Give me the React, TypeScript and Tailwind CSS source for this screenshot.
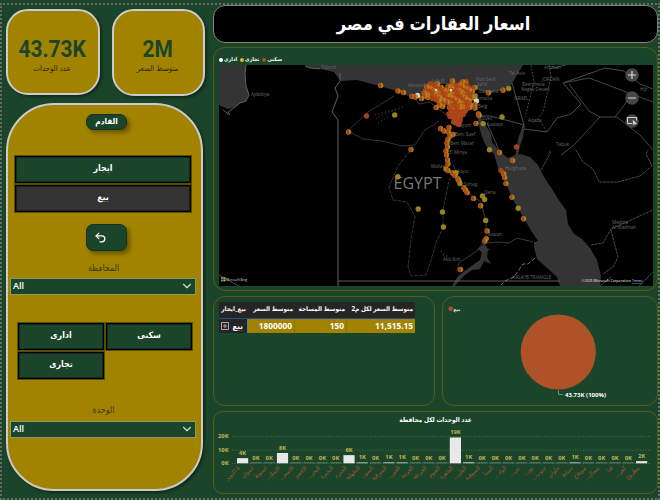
import React from "react";
import { ChevronDown, Undo2 } from "lucide-react";

type Kind = "s" | "o" | "y" | "w";
type Dot = [number, number, Kind];

const cities: Dot[] = [
  [380.7, 85.5, "s"], [398, 91, "s"], [403.5, 92.5, "s"], [417.5, 95.5, "w"], [412, 96.5, "s"], [415.5, 97, "s"],
  [366.5, 116, "o"], [394.7, 115, "y"], [348.5, 132, "s"], [411, 149.5, "s"], [397.8, 176.7, "y"], [418.2, 209, "y"],
  [442.5, 212, "y"], [443.5, 227, "y"], [452.5, 81, "s"], [475, 87.5, "s"], [488.5, 92.7, "s"], [503, 90.3, "s"],
  [508.7, 88.5, "y"], [475.2, 96, "y"], [476.4, 101, "w"], [475, 104.5, "s"], [475, 108, "s"], [478.5, 114, "s"],
  [479.3, 115.5, "s"], [483.2, 123.6, "y"], [476, 123.4, "s"], [502, 117, "y"], [516.5, 147, "o"], [489.5, 149.7, "y"],
  [499.5, 152.5, "s"], [512.6, 160.5, "s"], [501, 170.5, "o"], [503.7, 173.8, "s"], [504.7, 177.5, "s"], [505.9, 183.6, "s"],
  [512, 197.2, "s"], [518.2, 208.2, "y"], [523.5, 218.7, "s"], [440.5, 128.5, "s"], [444, 131, "s"], [449, 127.5, "s"],
  [448.5, 132, "s"], [453, 134.5, "s"], [450, 136, "s"], [448, 139.5, "s"], [447, 143, "s"], [447.5, 147, "s"],
  [446, 151, "s"], [446.5, 155, "s"], [447.5, 160, "s"], [448, 164, "s"], [446, 169, "y"], [448, 170.5, "s"],
  [452.5, 173, "s"], [456, 172.8, "y"], [455, 175.5, "s"], [458, 179, "s"], [460, 183.5, "y"], [459, 181, "s"],
  [464, 188, "s"], [465.5, 190, "s"], [467.2, 192.6, "s"], [473.5, 198.4, "s"], [482.5, 196, "y"], [484.6, 199.5, "y"],
  [480.6, 205.8, "s"], [485.7, 220.4, "y"], [487.2, 230.9, "s"], [486.3, 238.6, "s"], [484.9, 240.9, "s"], [460.5, 269.5, "s"],
];

/* Nile delta: rows of [y, left, right] filled with evenly jittered points */
const deltaRows: number[][] = [
  [83, 462, 467], [85.5, 429, 438], [86, 450, 467], [88.5, 426, 441], [88, 448, 469], [91.5, 424, 472],
  [94, 423, 470], [97, 422, 427], [97, 436, 471], [100, 432, 470], [103, 445, 470], [106, 437, 444],
  [106.5, 448, 471], [109.5, 450, 467], [112, 449, 465], [115, 447, 463], [118, 449, 460], [121, 453, 459], [124, 454, 458],
];
const delta: Dot[] = deltaRows.flatMap(([y, a, b], r) => {
  const out: Dot[] = [];
  let i = 0;
  for (let x = b; x >= a; x -= 2.3, i++) {
    const k = (r * 7 + i * 5) % 11;
    out.push([x + ((k * 3) % 4) * 0.6 - 0.9, y + ((k * 5) % 7) * 0.5 - 1.5, k % 3 === 0 || y > 111 ? "o" : "s"]);
  }
  return out;
});

function Bubble({ d }: { d: Dot }) {
  const [x, y, k] = d;
  const base = k === "o" ? "#ad4419" : k === "w" ? "#e6e0da" : k === "y" ? "#a58b20" : "#b8871c";
  return (
    <g opacity={0.93}>
      <circle cx={x} cy={y} r={2.7} fill={base} />
      {k === "s" && <path d={`M${x + 0.5} ${y - 2.7}A2.7 2.7 0 1 0 ${x + 0.5} ${y + 2.7}Z`} fill="#b4481a" />}
    </g>
  );
}

const places: [number, number, string][] = [
  [251, 96, "Ajdabiya"], [321, 69.3, "Tobruk"], [408, 86.5, "Alexandria"], [431, 83, "Kafr El"], [476, 81, "Port Said"],
  [477, 86, "Sa'id"], [479, 93, "Damiana"], [476, 99.5, "Ismailia"], [478, 108, "Belg"], [482, 120, "Suez"], [487, 125.5, "Suways"],
  [456, 127, "Faiyum"], [455, 136, "Beni Suef"], [450, 145, "Beni Mazar"], [449, 153.5, "El Minya"], [431, 168, "Mallawi"],
  [457, 172.5, "Asyut"], [464, 185.5, "Sohag"], [484, 193.5, "Qena"], [505, 170, "Hurghada"], [488, 236, "Aswan"],
  [443, 260.5, "Abu Sim"], [509, 74.5, "Tel Aviv"], [544, 69.3, "Amman"], [542, 81, "JORDAN"], [522, 86, "Beersheva"],
  [521, 91.2, "Negev Desert"], [514, 100, "ISRAEL"], [528, 122, "Aqaba"], [556, 146, "Tabuk"], [640, 91, "Hijr"],
  [612, 223.5, "Medina"], [612, 228.6, "Al Madinah"], [512, 279, "HALA'IB TRIANGLE"],
];

function MapArt() {
  return (
    <svg className="block h-[221px] w-[434px]" viewBox="219 65 434 221" fontFamily="'Open Sans','Noto Sans',sans-serif">
      <rect x="219" y="65" width="434" height="221" fill="#000" />
      <g fill="#343434">
        <path d="M219 65H246L245 74L246 86L249 94L246 101L240 103L235 107L228 109L219 105Z" />
        <path d="M305 65L309 68L320 69L334 72L339 79L341 81L357 80L376 85L397 91L411 97L422 98L429 87L438 84L451 84L466 81L475 89L488 93L503 90L511 85L517 75L523 65Z" />
        <path d="M477 115L482 119L491 134L492 142L500 152L508 158L515 155L521 154L530 157L538 165L544 177L552 189L558 199L566 210L568 224L574 234L582 239L590 248L597 260L601 276L600 286H560L557 277L546 267L537 259L534 247V242L538 241L532 232L523 217L513 200L506 184L498 168L494 154L486 146L482 137L479 126Z" />
        <path d="M523 125L525 126L523 137L520 146L518 156L515 157L518 139Z" />
        <path d="M484 242L488 249L487 257L491 264L484 261L480 269L472 270L465 275L458 282L455 286H452L458 276L470 267L480 260L482 252L477 249L482 246Z" />
      </g>
      <g fill="none" stroke="#4b4b4b" strokeWidth="1">
        <path d="M246 65L245 74L246 86L249 95L246 101L240 103L235 107L228 112L230 115L223 110M305 66L310 68L320 69M340 73L340 81L335 88L338 96L332 112L338 120V286" stroke="#606060" />
        <path d="M338 281H560" stroke="#5c5c5c" strokeWidth="1.2" />
        <path d="M219 275L239 286" />
        <path d="M512 83L524 125L522 128M524 129L547 132L557 118L571 114L581 104L563 83L605 68L624 71" />
        <path d="M531 65L534 82L525 117M549 65L551 77L543 112L538 118L547 132" strokeDasharray="2 1.5" />
        <path d="M563 83L589 78L653 102M624 71L640 84L653 89M549 69L566 65M569 84L589 111L600 117L617 117L640 135L653 150M600 117L574 145L561 155M615 117L625 104L630 95" stroke="#464646" />
        <path d="M541 170L550 154V150M576 150L583 162L593 169L599 182L618 182L640 176L652 166L646 154L648 150M591 245L603 243L611 229L653 210M611 230L618 257L613 267L603 274M600 286L611 277M639 286L653 272" strokeDasharray="3 .7" />
        <path d="M476 116H490L502 119L524 125M487 123L496 143L499 151" />
        <path d="M394 96L368 112L348 131L363 139L382 141L402 146L415 145L424 131L439 121M413 96L419 104L430 102L446 115" stroke="#353535" />
        <path d="M410 151L398 166L389 187L393 200L407 202L415 216L411 240L408 267L411 276L426 275L430 263L437 240L443 228V210L449 180L456 171" strokeDasharray="4 1" stroke="#343434" />
        <path d="M453 164L461 184L471 195L481 202L486 222L486 238L478 250L459 263L457 271" stroke="#383838" />
        <path d="M486 243L498 242L509 243L517 238L533 242M490 249L483 252" stroke="#383838" />
        <path d="M535 258L528 264L523 264L514 277L505 281L500 286" strokeDasharray="4 2" stroke="#777" />
      </g>
      <path d="M376 119Q385 112 402 108M375 115L403 107M378 123L390 116M443 255L456 260M441 251L447 256" stroke="#303030" strokeWidth="1.5" strokeDasharray="1 2.5" fill="none" />
      <g fill="#686868" fontSize="4.6">
        {places.map(([x, y, t]) => <text key={`${x}-${y}`} x={x} y={y}>{t}</text>)}
      </g>
      <text x="393.5" y="188.5" fill="#777" fontSize="17.2" textLength="48" lengthAdjust="spacingAndGlyphs">EGYPT</text>
      <g>{[...delta, ...cities].map((d, i) => <Bubble key={i} d={d} />)}</g>
      <g fill="#ded7cf"><circle cx="436" cy="90" r="1.3" /><circle cx="451" cy="90" r="1.3" /></g>
      <g fill="#474747"><circle cx="632" cy="75" r="6.7" /><circle cx="632" cy="98" r="6.7" /><circle cx="632" cy="121" r="6.7" /></g>
      <g stroke="#ddd" strokeWidth="1.2" fill="none">
        <path d="M628 75h8M632 71v8M628 98h8" />
        <path d="M632 123.5H627.5V117.5H636.5V120.5" strokeWidth=".9" />
        <path d="M633.3 120.5v4.3l1.2-1h2Z" strokeWidth=".7" fill="#ddd" />
      </g>
      <g>
        <path d="M221 277h2v2h-2z" fill="#f25022" /><path d="M223.4 277h2v2h-2z" fill="#7fba00" />
        <path d="M221 279.4h2v2h-2z" fill="#00a4ef" /><path d="M223.4 279.4h2v2h-2z" fill="#ffb900" />
        <text x="226" y="281.2" fill="#ddd" fontSize="4" textLength="21" lengthAdjust="spacingAndGlyphs">Microsoft Bing</text>
        <text x="581.5" y="282" fill="#ccc" fontSize="4" fontWeight="600" textLength="61" lengthAdjust="spacingAndGlyphs">
          ©2025 Microsoft Corporation <tspan fill="#9cb4ee" textDecoration="underline">Terms</tspan>
        </text>
      </g>
    </svg>
  );
}

const governorates: [string, number][] = [
  ["6 اكتوبر", 3.8], ["اسوان", 0], ["اسيوط", 0], ["الاسك…", 7.6], ["الاسم…", 0], ["الاقصر", 0], ["البحر…", 0.2],
  ["البحيرة", 0], ["الجيزة", 6], ["الدقهلية", 0.7], ["السو…", 0], ["الشرقية", 0.8], ["العين…", 0.6], ["الغربية", 0],
  ["الغردقة", 0], ["الفيوم", 0], ["القاهرة", 19], ["القلي…", 0.9], ["المنوفية", 0], ["المنيا", 0], ["الواد…", 0],
  ["بني…", 0], ["بور…", 0], ["جنوب…", 0], ["حلوان", 0], ["دمياط", 0.6], ["سوهاج", 0], ["شمال…", 0], ["قنا", 0],
  ["كفر…", 0], ["مطروح", 1.6],
];

function Chart() {
  return (
    <section className="flex h-[83px] flex-col rounded-[10px] border border-[#575b17]">
      <h2 dir="rtl" className="h-[13px] pt-[3px] text-center text-[6.5px] leading-[9px] font-bold text-white">عدد الوحدات لكل محافظة</h2>
      <svg className="block h-[67px] w-[443px] shrink-0" viewBox="214 425 443 67" fontFamily="'Open Sans','DejaVu Sans Condensed','DejaVu Sans',sans-serif">
        <g stroke="#49694e" strokeDasharray="1 1.6">
          <path d="M232 436.5H651M232 450.2H651M232 463.5H651" />
        </g>
        <g fill="#c3b44b" fontSize="5.8" fontWeight="700" textAnchor="end">
          <text x="228.5" y="438.4">20K</text><text x="228.5" y="452">10K</text><text x="228.5" y="465.2">0K</text>
        </g>
        {governorates.map(([name, v], i) => {
          const x = 242.6 + i * 13.3;
          const h = v * 1.36;
          return (
            <g key={name}>
              <rect x={x - 5.6} y={463.3 - Math.max(h, 1)} width="11.2" height={Math.max(h, 1)} fill={v > 1.2 ? "#e8e8e8" : v > 0.5 ? "#a9b7ac" : "#607c66"} />
              <text x={x} y={460.2 - h} fontSize="5.8" fontWeight="700" fill="#c3b44b" textAnchor="middle">{Math.round(v)}K</text>
              <text transform={`translate(${x - 2} 468.5) rotate(-42)`} direction="rtl" textAnchor="start" fontSize="6" fill="#a9542c">{name}</text>
            </g>
          );
        })}
        <text x="446" y="488.5" fontSize="4.6" fill="#27382a" direction="rtl">محافظة</text>
      </svg>
    </section>
  );
}

function Kpi({ value, label, size }: { value: string; label: string; size: string }) {
  return (
    <div className={`flex flex-col items-center rounded-[22px] border-[2.5px] border-[#cbcbcb] bg-[#a28300] pt-[26px] shadow-[2px_2px_3px_rgba(0,0,0,.4)] ${size}`}>
      <div className="scale-x-[.91] pr-[2px] font-['Roboto',sans-serif] text-[23px] leading-[26px] font-bold text-[#1b452b]">{value}</div>
      <div dir="rtl" className="pr-[2px] text-[7.8px] leading-[10px] text-[#2c2a12]">{label}</div>
    </div>
  );
}

function Tile({ children, className }: { children: React.ReactNode; className: string }) {
  return (
    <div dir="rtl" className={`flex h-[27px] shrink-0 items-center justify-center border border-black text-[8.8px] font-semibold text-white shadow-[0_0_0_1px_#5c4c00,inset_0_0_0_1px_rgba(0,0,0,.4)] ${className}`}>
      {children}
    </div>
  );
}

function Dropdown() {
  return (
    <div className="flex h-[17px] w-[186px] items-center justify-between border border-[#8d9b6b] bg-[#1b452b] pr-[1px] pl-[2px] text-[9px] font-semibold text-white">
      <span>All</span>
      <ChevronDown className="h-[14px] w-[14px] text-[#d8ded9]" strokeWidth={2} />
    </div>
  );
}

const columns = ["بيع_ايجار", "متوسط السعر", "متوسط المساحة", "متوسط السعر لكل م2"];

export default function App() {
  return (
    <main className="h-[500px] w-[660px] overflow-hidden bg-[#1b452b] pt-[3px] font-['Open_Sans','DejaVu_Sans_Condensed','DejaVu_Sans',sans-serif]">
      <div className="flex h-[497px] border-2 border-dotted border-[#686c62] pl-[4px]">
        <aside className="w-[207px] shrink-0 pt-[4px]">
          <div className="flex h-[87px] gap-[12px]">
            <Kpi value="43.73K" label="عدد الوحدات" size="w-[94px] h-[86px]" />
            <Kpi value="2M" label="متوسط السعر" size="w-[93px] h-[87px]" />
          </div>
          <div className="mt-[7px] flex h-[388px] w-[197px] flex-col items-center rounded-[48px] border-[2.5px] border-[#cbcbcb] bg-[#a28300] shadow-[2px_2px_3px_rgba(0,0,0,.4)]">
            <div dir="rtl" className="mt-[8.5px] ml-[4px] flex h-[16px] w-[41px] items-center justify-center rounded-[7px] border border-[#143320] bg-[#1b452b] text-[8.2px] font-bold text-white shadow-[3px_3px_4px_rgba(0,0,0,.35)]">القادم</div>
            <Tile className="mt-[26px] mr-[3px] w-[176px] bg-[#1b452b]">ايجار</Tile>
            <Tile className="mt-[2px] mr-[3px] w-[176px] bg-[#333333]">بيع</Tile>
            <div className="mt-[12px] ml-[4px] flex h-[27px] w-[41px] items-center rounded-[7px] border border-[#143320] bg-[#1b452b] pl-[7px] shadow-[3px_3px_4px_rgba(0,0,0,.35)]">
              <Undo2 className="h-[13px] w-[13px] text-white" strokeWidth={2.3} />
            </div>
            <div dir="rtl" className="mt-[11px] mr-[2px] h-[16px] text-[8.8px] leading-[12px] text-[#3c3714]">المحافظة</div>
            <div className="mr-[3px]"><Dropdown /></div>
            <div className="mt-[28px] ml-[1px] grid w-[174px] grid-cols-2 gap-[2px]">
              <Tile className="bg-[#1b452b]">ادارى</Tile>
              <Tile className="bg-[#1b452b]">سكنى</Tile>
              <Tile className="bg-[#1b452b]">تجارى</Tile>
            </div>
            <div dir="rtl" className="mt-[25px] mr-[2px] h-[17px] text-[8.8px] leading-[12px] text-[#3c3714]">الوحدة</div>
            <div className="mr-[3px]"><Dropdown /></div>
          </div>
        </aside>

        <div className="flex w-[445px] shrink-0 flex-col">
          <h1 dir="rtl" className="flex h-[38px] items-center justify-center rounded-[12px] border border-[#858585] bg-black pr-[4px] text-[18.1px] font-semibold text-white">
            <span className="pr-[0px]">اسعار العقارات في مصر</span>
          </h1>
          <section className="mt-[4px] h-[244px] rounded-[12px] border border-[#575b17] pl-[5px]">
            <div className="flex h-[17px] items-center gap-[1px] pt-[6px] text-[5.4px] font-semibold text-white">
              <i className="h-[4px] w-[4px] rounded-full bg-white" /><span>ادارى</span>
              <i className="ml-[2px] h-[4px] w-[4px] rounded-full bg-[#e2b52b]" /><span>تجارى</span>
              <i className="ml-[2px] h-[4px] w-[4px] rounded-full bg-[#b04f28]" /><span>سكنى</span>
            </div>
            <MapArt />
          </section>
          <div className="mt-[5px] mb-[5px] flex h-[110px] gap-[7px]">
            <section className="w-[222px] rounded-[12px] border border-[#575b17] pt-[5px] pl-[5px]">
              <div className="grid w-[196px] grid-cols-[29px_47px_52px_68px] text-right font-bold whitespace-nowrap text-white">
                {columns.map((t) => (
                  <div key={t} dir="rtl" className="flex h-[17px] items-center justify-start border-b border-[#1d4f86] bg-[#252525] px-[2px] pb-[2px] text-[6.4px]">{t}</div>
                ))}
                <div className="flex h-[14px] items-center justify-between border-r border-[#4d8a9c] bg-[#252525] pr-[4px] pl-[2px] text-[8px]">
                  <svg className="h-[8px] w-[8px]" viewBox="0 0 8 8" fill="none" stroke="#aaa"><path d="M.5.5h7v7h-7zM2 4h4M4 2v4" /></svg>
                  <span>بيع</span>
                </div>
                <div className="h-[14px] border-r border-[#8c730a] bg-[#a28300] pr-[2px] text-[8.3px] leading-[14px]">1800000</div>
                <div className="h-[14px] border-r border-[#8c730a] bg-[#a28300] pr-[2px] text-[8.3px] leading-[14px]">150</div>
                <div className="h-[14px] bg-[#a28300] pr-[2px] text-[8.3px] leading-[14px]">11,515.15</div>
              </div>
            </section>
            <section className="w-[216px] rounded-[12px] border border-[#575b17]">
              <svg className="block h-[108px] w-[214px]" viewBox="443 297 214 108">
                <circle cx="450.7" cy="308.7" r="2.2" fill="#b15229" />
                <text x="453.3" y="311.3" fontSize="5.2" fontWeight="700" fill="#ddd">بيع</text>
                <circle cx="558.3" cy="352" r="37.6" fill="#ae5228" />
                <path d="M558.5 390V394.5H563" stroke="#6d8b73" fill="none" />
                <text x="565" y="397" fontSize="6" fontWeight="700" fill="#fff" textLength="41" lengthAdjust="spacingAndGlyphs">43.73K (100%)</text>
              </svg>
            </section>
          </div>
          <Chart />
        </div>
      </div>
    </main>
  );
}
